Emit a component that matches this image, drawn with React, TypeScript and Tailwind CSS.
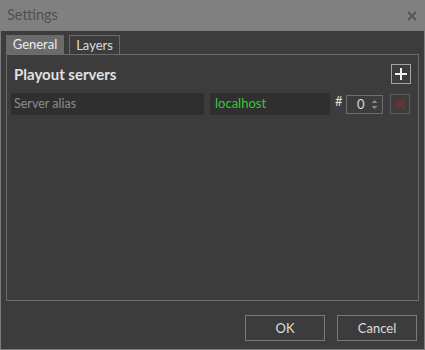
export default function App() {
  return (
    <div className="w-[425px] h-[350px] flex flex-col bg-[#3c3c3c] font-['Lato',sans-serif] text-[13px] text-[#dedede]">
      <div className="h-[31px] shrink-0 bg-[#808080] flex items-center justify-between pl-[7px] pr-[7px]">
        <span className="text-[14.5px] text-[#505050] leading-none">Settings</span>
        <svg width="10" height="10" viewBox="0 0 10 10" className="mr-[1px]">
          <path d="M1 1 L9 9 M9 1 L1 9" stroke="#555" strokeWidth="2" />
        </svg>
      </div>
      <div className="flex-1 flex flex-col border-x border-b border-[#7c7c7c] pl-[5px] pr-[5px] pt-[4px]">
        <div className="flex gap-[5px] h-[19px]">
          <div className="w-[58px] bg-[#6a6a6a] flex items-center justify-center text-[#ececec] leading-none">
            General
          </div>
          <div className="w-[51px] border border-b-0 border-[#6a6a6a] flex items-center justify-center leading-none">
            Layers
          </div>
        </div>
        <div className="h-[247px] border border-[#6c6c6c] pl-[4px] pr-[7px] pt-[9px] flex flex-col gap-[9px]">
          <div className="flex items-center justify-between h-[20px]">
            <span className="ml-[3px] text-[15px] font-bold text-[#e2e2e2] leading-none">Playout servers</span>
            <div className="w-[20px] h-[20px] border border-[#a4a4a4] flex items-center justify-center">
              <svg width="12" height="12" viewBox="0 0 12 12">
                <path d="M6 0 V12 M0 6 H12" stroke="#f2f2f2" strokeWidth="2" />
              </svg>
            </div>
          </div>
          <div className="flex items-center h-[22px]">
            <div className="w-[193px] h-[22px] bg-[#2f2f2f] flex items-center pl-[3px] text-[12.5px] text-[#8c8c8c]">
              Server alias
            </div>
            <div className="ml-[6px] w-[120px] h-[22px] bg-[#2f2f2f] flex items-center pl-[5px] text-[#3cc63c]">
              localhost
            </div>
            <span className="ml-[5px] w-[11px] text-[13px] self-start -mt-[1px] text-[#e0e0e0]">#</span>
            <div className="w-[37px] h-[19px] border border-[#6e6e6e] flex items-center justify-between pl-[10px] pr-[4px]">
              <span className="text-[#dcdcdc] leading-none">0</span>
              <svg width="7" height="11" viewBox="0 0 7 11">
                <path d="M0.5 4 L3.5 1 L6.5 4 Z M0.5 7 L3.5 10 L6.5 7 Z" fill="#8a8a8a" />
              </svg>
            </div>
            <div className="ml-[7px] w-[20px] h-[20px] border border-[#5c5c5c] flex items-center justify-center">
              <svg width="11" height="11" viewBox="0 0 11 11">
                <path d="M1 1 L10 10 M10 1 L1 10" stroke="#6e3030" strokeWidth="2.6" />
              </svg>
            </div>
          </div>
        </div>
        <div className="flex-1 flex items-end justify-end gap-[12px] pb-[8px] pr-[2px]">
          <button className="w-[80px] h-[26px] border border-[#7a7a7a] text-[#dedede] leading-none">OK</button>
          <button className="w-[80px] h-[26px] border border-[#7a7a7a] text-[#dedede] leading-none">Cancel</button>
        </div>
      </div>
    </div>
  );
}
